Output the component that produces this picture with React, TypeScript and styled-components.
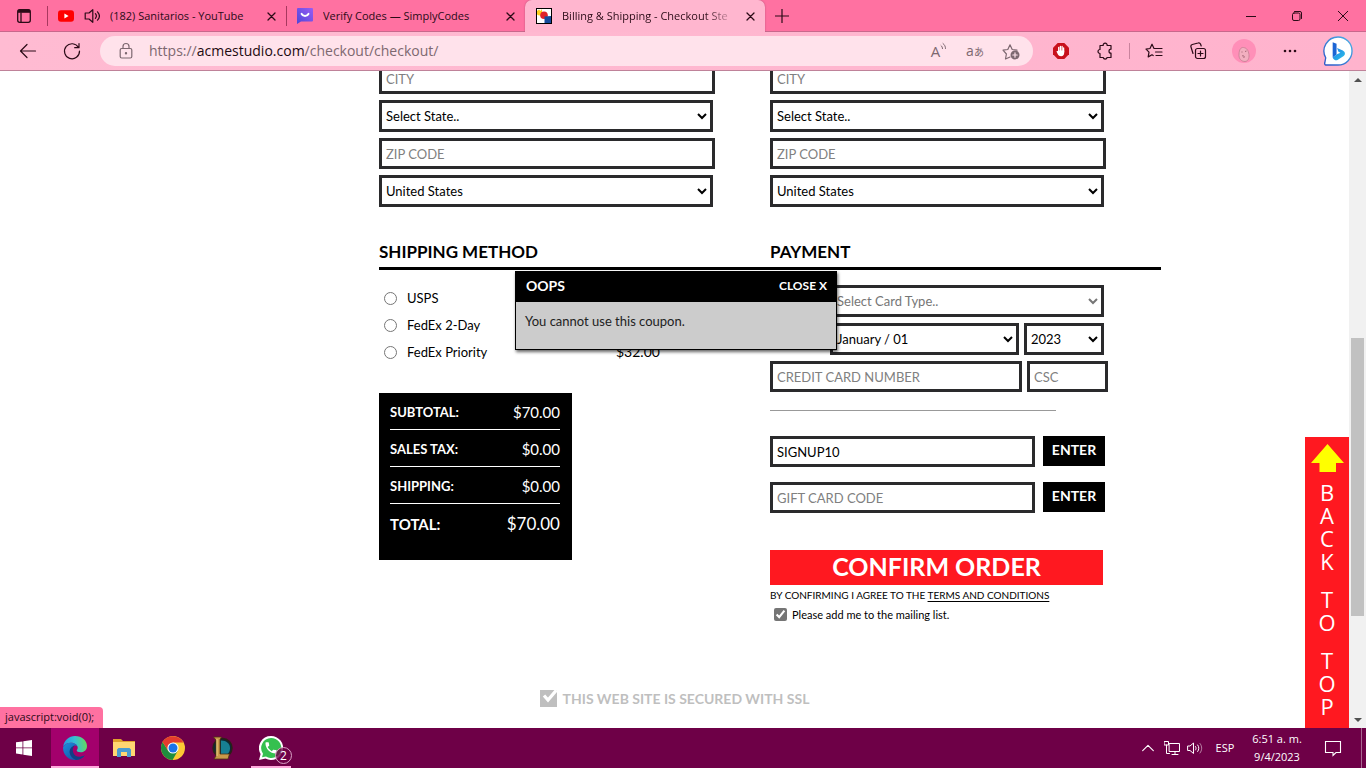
import React from 'react';
import styled, { createGlobalStyle } from 'styled-components';

const shopFont = 'Lato, "Liberation Sans", sans-serif';
const chromeFont = '"Open Sans", "Noto Sans", "Noto Sans CJK JP", sans-serif';

const GlobalStyle = createGlobalStyle`
  *, *::before, *::after { box-sizing: border-box; }
  body { margin: 0; background: #fff; }
  button { border: 0; padding: 0; background: none; color: inherit; font: inherit; }
  svg { display: block; flex: none; }
`;

const Desktop = styled.div`
  display: flex;
  flex-direction: column;
  height: 100vh;
  overflow: hidden;
  font-family: ${chromeFont};
  font-size: 11px;
  color: #2b0b17;
`;

/* Browser tab strip */
const TabStrip = styled.header`
  display: flex;
  flex: none;
  height: 32px;
  background: #ff71a1;
  box-shadow: inset 0 -1px #c8688c;
`;
const TabActions = styled.button`
  display: flex;
  align-items: center;
  justify-content: center;
  width: 47px;
`;
const Tab = styled.div<{ $active?: boolean }>`
  display: flex;
  align-items: center;
  gap: 10px;
  width: ${(p) => (p.$active ? 240 : 239)}px;
  padding: 0 10px;
  border-left: 1px solid transparent;
  ${(p) =>
    p.$active
      ? 'background: #ffb6cf; border-radius: 7px 7px 0 0; box-shadow: 0 0 2px #b8527a; clip-path: inset(0 -2px 0 -2px);'
      : 'background: linear-gradient(#a8385f, #a8385f) 0 6px / 1px 20px no-repeat border-box;'}
`;
const TabTitle = styled.span<{ $faded?: boolean }>`
  flex: 1;
  min-width: 0;
  overflow: hidden;
  white-space: nowrap;
  line-height: 16px;
  ${(p) => p.$faded && 'mask-image: linear-gradient(90deg, #000 82%, transparent);'}
`;
const TabClose = styled.button`
  display: flex;
  align-items: center;
`;
const NewTab = styled.button`
  display: flex;
  align-items: center;
  padding: 0 10px;
`;
const WindowControls = styled.div`
  display: flex;
  margin-left: auto;
`;
const WindowButton = styled.button`
  display: flex;
  align-items: center;
  justify-content: center;
  width: 46px;
`;

/* Browser toolbar */
const Toolbar = styled.nav`
  display: flex;
  flex: none;
  align-items: center;
  height: 39px;
  padding: 0 2px 0 6px;
  background: linear-gradient(90deg, #ffbbd2, #ffb3cd);
  border-bottom: 1px solid #bf8299;
`;
const ToolButton = styled.button<{ $width?: number }>`
  display: flex;
  align-items: center;
  justify-content: center;
  flex: none;
  width: ${(p) => p.$width ?? 44}px;
  height: 32px;
`;
const AddressBar = styled.div`
  display: flex;
  flex: 1;
  align-items: center;
  min-width: 0;
  height: 30px;
  margin: 0 6px;
  padding: 0 4px 0 16px;
  border-radius: 15px;
  background: #ffe2eb;
  color: #7d6870;
`;
const Address = styled.span`
  flex: 1;
  min-width: 0;
  overflow: hidden;
  padding-left: 13px;
  white-space: nowrap;
  font-size: 14px;
  line-height: 20px;
  b { font-weight: 400; color: #1d0a11; }
`;
const ReadAloud = styled.span`
  display: flex;
  align-items: flex-start;
  font-size: 15px;
  line-height: 18px;
`;
const Translate = styled.span`
  font-size: 14px;
  line-height: 18px;
  small { font-size: 10px; }
`;
const ToolDivider = styled.span`
  width: 1px;
  height: 16px;
  margin: 0 2px;
  background: #c9839d;
`;

/* Web page */
const Viewport = styled.div`
  position: relative;
  display: flex;
  flex: 1;
  min-height: 0;
  background: #fff;
`;
const PageArea = styled.div`
  position: relative;
  flex: 1;
  min-width: 0;
  overflow: hidden;
  font-family: ${shopFont};
  font-size: 13px;
  color: #000;
`;
const Checkout = styled.form`
  max-width: 973px;
  margin: -8px auto 0;
  padding-left: 191px;
`;
const Columns = styled.div`
  position: relative;
  display: grid;
  grid-template-columns: 1fr 1fr;
`;
const FieldStack = styled.div`
  display: flex;
  flex-direction: column;
  gap: 6px;
`;
const Field = styled.input<{ $width: number }>`
  width: ${(p) => p.$width}px;
  height: 31px;
  padding: 0 4px;
  border: 3px solid #2a2a2c;
  border-radius: 0;
  background: #fff;
  color: #000;
  font: 13px ${shopFont};
  outline: 0;
  &::placeholder { color: #808080; opacity: 1; }
`;
const Choice = styled.select<{ $width: number; $muted?: boolean }>`
  width: ${(p) => p.$width}px;
  height: 32px;
  padding: 0;
  border: 3px solid #2a2a2c;
  border-radius: 0;
  background: #fff;
  color: ${(p) => (p.$muted ? '#767676' : '#000')};
  font: 13px ${shopFont};
`;
const Headings = styled(Columns)`
  margin-top: 33px;
  padding-bottom: 3px;
  border-bottom: 3px solid #000;
`;
const Heading = styled.h2`
  margin: 0;
  font-size: 17px;
  line-height: 24px;
`;
const Column = styled.section`
  padding-top: 15px;
`;
const ShippingOption = styled.label`
  display: grid;
  grid-template-columns: 13px 199px auto;
  column-gap: 10px;
  align-items: center;
  height: 27px;
  padding-left: 5px;
  line-height: 18px;
  input { width: 13px; height: 13px; margin: 0; }
  span { padding-bottom: 2px; }
`;
const ShippingPrice = styled.span`
  font-size: 14px;
`;
const Summary = styled.dl`
  width: 193px;
  margin: 27px 0 0;
  padding: 0 12px 19px 11px;
  background: #000;
  color: #fff;
`;
const SummaryRow = styled.div<{ $total?: boolean }>`
  display: flex;
  align-items: center;
  justify-content: space-between;
  height: 37px;
  padding-top: 2px;
  border-bottom: ${(p) => (p.$total ? 0 : 1)}px solid #fff;
  dt { font-weight: 700; font-size: ${(p) => (p.$total ? 15 : 13)}px; }
  dd { margin: 0; font-size: ${(p) => (p.$total ? 17 : 15)}px; }
`;
const PaymentRow = styled.div<{ $indent?: boolean }>`
  display: flex;
  gap: 5px;
  padding-left: ${(p) => (p.$indent ? 60 : 0)}px;
`;
const Divider = styled.hr`
  width: 286px;
  height: 1px;
  margin: 18px 0 25px;
  border: 0;
  background: #999;
`;
const CodeRow = styled.div`
  display: flex;
  gap: 8px;
  margin-bottom: 15px;
`;
const EnterButton = styled.button`
  width: 62px;
  height: 30px;
  padding-bottom: 4px;
  background: #000;
  color: #fff;
  font-weight: 700;
  font-size: 14px;
`;
const ConfirmButton = styled.button`
  display: block;
  width: 333px;
  height: 35px;
  margin-top: 37px;
  padding-bottom: 2px;
  background: #ff1820;
  color: #fff;
  font-weight: 700;
  font-size: 25px;
  line-height: 33px;
`;
const Terms = styled.p`
  margin: 0;
  font-size: 10px;
  line-height: 20px;
  a { color: inherit; text-underline-offset: 2px; }
`;
const MailingList = styled.label`
  display: flex;
  align-items: center;
  gap: 5px;
  height: 19px;
  padding-left: 4px;
  font-size: 11px;
  input { width: 13px; height: 13px; margin: 0; accent-color: #757575; }
`;
const Secured = styled.footer`
  display: flex;
  align-items: center;
  justify-content: center;
  gap: 6px;
  height: 18px;
  margin-top: 65px;
  color: #bfbfbf;
  font-weight: 700;
  font-size: 14px;
`;
const Dialog = styled.div`
  position: absolute;
  top: 1px;
  left: 136px;
  width: 322px;
  border: 1px solid #000;
  background: #ccc;
  box-shadow: 1px 2px 3px rgba(0, 0, 0, 0.6);
`;
const DialogHeader = styled.div`
  display: flex;
  align-items: center;
  justify-content: space-between;
  height: 30px;
  padding: 0 9px 4px 10px;
  background: #000;
  color: #fff;
  font-weight: 700;
  font-size: 14px;
`;
const DialogClose = styled.button`
  font-size: 12px;
`;
const DialogText = styled.p`
  margin: 0;
  padding: 9px 9px 18px;
  line-height: 20px;
  color: #222;
`;
const BackToTop = styled.a`
  position: absolute;
  right: 0;
  bottom: 0;
  display: flex;
  flex-direction: column;
  align-items: center;
  gap: 15px;
  width: 44px;
  padding: 7px 0 10px;
  background: #ff1820;
  color: #fff;
  font: 22px/23px "Open Sans", "Noto Sans", sans-serif;
  text-decoration: none;
  svg { margin-bottom: -6px; }
`;
const StackedWord = styled.span`
  width: 18px;
  text-align: center;
  word-break: break-all;
`;
const ScrollBar = styled.div`
  display: flex;
  flex-direction: column;
  align-items: center;
  flex: none;
  width: 17px;
  background: #f1f1f1;
`;
const ScrollArrow = styled.button`
  display: flex;
  align-items: center;
  justify-content: center;
  width: 17px;
  height: 17px;
`;
const ScrollGap = styled.div<{ $grow: number }>`
  flex: ${(p) => p.$grow};
`;
const ScrollThumb = styled.div`
  flex: 278;
  width: 13px;
  background: #c1c1c1;
`;
const LinkStatus = styled.div`
  position: absolute;
  left: 0;
  bottom: 0;
  padding: 2px 9px 3px 5px;
  border-radius: 0 4px 0 0;
  background: #ff71a1;
  line-height: 16px;
`;

/* Taskbar */
const Taskbar = styled.footer`
  display: flex;
  flex: none;
  height: 40px;
  gap: 1px;
  background: #6e0047;
  color: #fff;
`;
const TaskButton = styled.button<{ $active?: boolean; $running?: boolean }>`
  position: relative;
  display: flex;
  align-items: center;
  justify-content: center;
  width: 48px;
  background: ${(p) => (p.$active ? '#a3006c' : 'none')};
  &:first-child { margin-right: 2px; }
  &::after {
    content: '';
    position: absolute;
    bottom: 0;
    left: ${(p) => (p.$active ? 0 : 4)}px;
    right: ${(p) => (p.$active ? 0 : 4)}px;
    height: ${(p) => (p.$running ? 2 : 0)}px;
    background: #ffa9dc;
  }
`;
const UnreadBadge = styled.span`
  position: absolute;
  left: 28px;
  top: 19px;
  width: 17px;
  height: 17px;
  border: 1px solid #d9a3c6;
  border-radius: 50%;
  background: rgba(110, 0, 71, 0.8);
  font-size: 12px;
  line-height: 15px;
  text-align: center;
`;
const Tray = styled.div`
  display: flex;
  align-items: center;
  margin-left: auto;
`;
const TrayButton = styled.button<{ $width: number }>`
  display: flex;
  align-items: center;
  justify-content: center;
  width: ${(p) => p.$width}px;
  height: 40px;
  line-height: 18px;
`;
const ShowDesktop = styled.button`
  width: 5px;
  height: 40px;
  border-left: 1px solid #a86690;
`;

type LineIconProps = { size?: number; stroke?: string; weight?: number; children: React.ReactNode };
const LineIcon = ({ size = 20, stroke = 'currentColor', weight = 1.2, children }: LineIconProps) => (
  <svg width={size} height={size} viewBox={`0 0 ${size} ${size}`} fill="none" stroke={stroke} strokeWidth={weight} strokeLinecap="round" strokeLinejoin="round" aria-hidden="true">
    {children}
  </svg>
);

const CloseIcon = () => (
  <LineIcon size={9} weight={1.3}><path d="M1 1l7 7M8 1L1 8" /></LineIcon>
);

const TabMenuIcon = () => (
  <LineIcon size={16} weight={1.3}>
    <rect x="1.7" y="1.7" width="12.6" height="12.6" rx="2" />
    <path d="M2 3.3h12" strokeWidth="3" strokeLinecap="butt" />
    <path d="M5 5v9" />
  </LineIcon>
);

const YouTubeIcon = () => (
  <svg width="16" height="16" viewBox="0 0 16 16" aria-hidden="true">
    <rect y="2.3" width="16" height="11.4" rx="3" fill="#f00" />
    <path d="M6.4 5.6v4.8L10.6 8z" fill="#fff" />
  </svg>
);

const SpeakerIcon = () => (
  <LineIcon size={16}>
    <path d="M8.8 1.7v12.6L5 11H1.2V5H5zM11.4 5.7c1.2 1.4 1.2 3.2 0 4.6M13.5 3.8c2.3 2.5 2.3 5.9 0 8.4" />
  </LineIcon>
);

const SimplyCodesIcon = () => (
  <svg width="16" height="16" viewBox="0 0 16 16" aria-hidden="true">
    <defs>
      <linearGradient id="codes" x1="0" y1="1" x2="1" y2="0">
        <stop offset="0" stopColor="#4c46d8" />
        <stop offset="1" stopColor="#9a5cf4" />
      </linearGradient>
    </defs>
    <path d="M1 0h14a1 1 0 0 1 1 1v11.500a1 1 0 0 1-1 1H4L0 16V1a1 1 0 0 1 1-1z" fill="url(#codes)" />
    <path d="M4.600 5.800C5.800 8.600 10.300 8.600 11.500 5.800" fill="none" stroke="#fff" strokeWidth="2" strokeLinecap="round" />
  </svg>
);

const ShopIcon = () => (
  <svg width="16" height="16" viewBox="0 0 16 16" aria-hidden="true">
    <rect x=".5" y=".5" width="15" height="15" fill="#fff" stroke="#000" />
    <path d="M1 3l2-1.500L4.500 3 6 1v6l-3 .5L1 6.500z" fill="#ffd21f" />
    <circle cx="8" cy="7.200" r="3.800" fill="#e0222a" />
    <path d="M8.500 8.500L15 8v7H8.500z" fill="#154a9c" />
  </svg>
);

const BingIcon = () => (
  <svg width="30" height="30" viewBox="0 0 31 31" aria-hidden="true">
    <defs>
      <linearGradient id="bing" x1="0" y1="0" x2="1" y2="1">
        <stop offset="0" stopColor="#1f7de6" />
        <stop offset="1" stopColor="#2cc3e8" />
      </linearGradient>
      <linearGradient id="bubble" x1="0" y1="1" x2="1" y2="0">
        <stop offset="0" stopColor="#2b55c8" />
        <stop offset="1" stopColor="#4bb4e6" />
      </linearGradient>
    </defs>
    <path d="M15.500 1A14.500 14.500 0 1 1 15.500 30H3A1.500 1.500 0 0 1 1.800 28L2.800 22.500A14.500 14.500 0 0 1 15.500 1z" fill="#fff" stroke="url(#bubble)" strokeWidth="1.400" />
    <path d="M10 6.500l4 1.500v11.200l-4 3z" fill="#1b64d4" />
    <path d="M10 22.200l4-3 4-2-2-.9-1.500-3.800 6 2.500c2.600 1.300 2.900 4 .9 5.700l-6.400 4.200c-2 .8-4.200-.4-5-2.700z" fill="url(#bing)" />
  </svg>
);

const EdgeIcon = () => (
  <svg width="24" height="24" viewBox="0 0 24 24" aria-hidden="true">
    <defs>
      <linearGradient id="edgeTop" x1="0" y1=".5" x2="1" y2=".4">
        <stop offset="0" stopColor="#2496e0" />
        <stop offset=".5" stopColor="#35bfd6" />
        <stop offset="1" stopColor="#66d95b" />
      </linearGradient>
      <linearGradient id="edgeLow" x1="0" y1="0" x2="1" y2="1">
        <stop offset="0" stopColor="#1b8ddd" />
        <stop offset="1" stopColor="#10489a" />
      </linearGradient>
    </defs>
    <path d="M.2 10.500C1 4.500 6 0 12 0c7 0 12 4.800 12 10 0 4-3 6.300-6.400 6.300-2.600 0-3.900-.9-3.900-1.700 0-.6 1-1 1-2.800C14.700 9.300 12 6.800 8 6.800 4.600 6.800 1.800 8.300.2 10.500z" fill="url(#edgeTop)" />
    <path d="M.1 11C1.700 8.300 4.600 6.800 8 6.800c3.400 0 5.800 1.800 6.500 3.800-.8-.8-1.800-1.100-2.800-1.100-3.200 1-4.700 5-2.700 8.500 2.300 3.800 7.500 4.800 12.800 1.300C19.600 22.300 16 24 12 24 5 24-.4 18 .1 11z" fill="url(#edgeLow)" />
    <path d="M11.700 9.500c-2.600.6-5.700 3.600-5 7.600.5 3.200 2.900 5.800 6.300 6.800 3.700.1 6.900-1.700 8.800-4.600-5.300 2.800-10.300 1.500-11.600-2.800-.9-2.800-.2-5.500 1.500-7z" fill="#123f85" />
  </svg>
);

const FolderIcon = () => (
  <svg width="22" height="20" viewBox="0 0 22 20" aria-hidden="true">
    <path d="M0 1h8l2 2h12V18H0z" fill="#e0a12c" />
    <path d="M0 4h22V18H0z" fill="#ffd672" />
    <path d="M4 19v-7.500L5.500 10h11l1.500 1.500V19h-4v-5H8v5z" fill="#4a9cd0" />
  </svg>
);

const ChromeIcon = () => (
  <svg width="24" height="24" viewBox="0 0 24 24" aria-hidden="true">
    <circle cx="12" cy="12" r="12" fill="#fcc934" />
    <path d="M1.600 6A12 12 0 0 0 11.600 24L16.800 14.800 12 12 7.200 14.700z" fill="#1e8e3e" />
    <path d="M1.600 6A12 12 0 0 1 22.500 6.500H12L7.200 14.700z" fill="#e33b2e" />
    <circle cx="12" cy="12" r="5.600" fill="#fff" />
    <circle cx="12" cy="12" r="4.500" fill="#1a73e8" />
  </svg>
);

const LeagueIcon = () => (
  <svg width="22" height="24" viewBox="0 0 22 24" aria-hidden="true">
    <circle cx="11.500" cy="12" r="9.500" fill="#0b2a36" stroke="#2b2117" strokeWidth="1.500" />
    <path d="M10 4.500c5.500 0 9 3.200 9 7.700 0 2.500-1 4.500-2.500 5.800H10z" fill="#177f93" />
    <path d="M2.500 1h8L9 3.500V18h9.500L17 23H3l2-3V4z" fill="#c9994a" stroke="#4b3414" strokeWidth=".8" />
    <path d="M6 3v17" stroke="#ecd08a" />
  </svg>
);

const WhatsAppIcon = () => (
  <svg width="24" height="24" viewBox="0 0 24 24" aria-hidden="true">
    <path d="M12 0a12 12 0 1 1-5.500 22.600L0 24l1.600-6A12 12 0 0 1 12 0z" fill="#fff" />
    <path d="M12 2a10 10 0 1 1-5 18.500L3 21.300l1-3.600A10 10 0 0 1 12 2z" fill="#35c04f" />
    <path transform="translate(4.600 4.400) scale(.62)" d="M6.600 10.800c1.400 2.800 3.800 5.100 6.600 6.600l2.200-2.200c.3-.3.7-.4 1-.2 1.100.4 2.300.6 3.600.6.6 0 1 .4 1 1V20c0 .6-.4 1-1 1C10.600 21 3 13.400 3 4c0-.6.4-1 1-1h3.500c.6 0 1 .4 1 1 0 1.200.2 2.400.6 3.600.1.3 0 .7-.2 1z" fill="#fff" />
  </svg>
);

const AddressFields = ({ name }: { name: string }) => (
  <FieldStack>
    <Field $width={336} placeholder="CITY" aria-label={`${name} city`} />
    <Choice $width={334} aria-label={`${name} state`}><option>Select State..</option></Choice>
    <Field $width={336} placeholder="ZIP CODE" aria-label={`${name} zip code`} />
    <Choice $width={334} aria-label={`${name} country`}><option>United States</option></Choice>
  </FieldStack>
);

const shipping = [
  { label: 'USPS' },
  { label: 'FedEx 2-Day' },
  { label: 'FedEx Priority', price: '$32.00' },
];

const totals = [
  { label: 'SUBTOTAL:', amount: '$70.00' },
  { label: 'SALES TAX:', amount: '$0.00' },
  { label: 'SHIPPING:', amount: '$0.00' },
  { label: 'TOTAL:', amount: '$70.00', total: true },
];

export default function App() {
  return (
    <Desktop>
      <GlobalStyle />
      <TabStrip>
        <TabActions aria-label="Tab actions"><TabMenuIcon /></TabActions>
        <Tab>
          <YouTubeIcon />
          <SpeakerIcon />
          <TabTitle>(182) Sanitarios - YouTube</TabTitle>
          <TabClose aria-label="Close tab"><CloseIcon /></TabClose>
        </Tab>
        <Tab>
          <SimplyCodesIcon />
          <TabTitle>Verify Codes — SimplyCodes</TabTitle>
          <TabClose aria-label="Close tab"><CloseIcon /></TabClose>
        </Tab>
        <Tab $active>
          <ShopIcon />
          <TabTitle $faded>Billing &amp; Shipping - Checkout Ste</TabTitle>
          <TabClose aria-label="Close tab"><CloseIcon /></TabClose>
        </Tab>
        <NewTab aria-label="New tab"><LineIcon size={14}><path d="M7 0v14M0 7h14" /></LineIcon></NewTab>
        <WindowControls>
          <WindowButton aria-label="Minimize"><LineIcon size={10} weight={1}><path d="M0 5.500h10" /></LineIcon></WindowButton>
          <WindowButton aria-label="Restore"><LineIcon size={10} weight={1}><rect x=".5" y="2" width="7.500" height="7.500" rx="1.500" /><path d="M2.500 .5H8A1.500 1.500 0 0 1 9.500 2v5.500" /></LineIcon></WindowButton>
          <WindowButton aria-label="Close"><LineIcon size={10} weight={1}><path d="M0 0l10 10M10 0L0 10" /></LineIcon></WindowButton>
        </WindowControls>
      </TabStrip>

      <Toolbar>
        <ToolButton aria-label="Back"><LineIcon><path d="M17.500 10H3M9 3.500L2.500 10 9 16.500" /></LineIcon></ToolButton>
        <ToolButton aria-label="Refresh"><LineIcon><path d="M16.500 6.500A7.500 7.500 0 1 0 17.500 10M17 2.500v4.200h-4.300" /></LineIcon></ToolButton>
        <AddressBar>
          <LineIcon><rect x="4.200" y="7.500" width="11.600" height="9.500" rx="1.500" /><path d="M7 7.500V5.500a3 3 0 0 1 6 0v2" /><circle cx="10" cy="12.200" r=".6" fill="currentColor" /></LineIcon>
          <Address>https://<b>acmestudio.com</b>/checkout/checkout/</Address>
          <ToolButton $width={36} aria-label="Read aloud">
            <ReadAloud>A<LineIcon size={7} weight={1}><path d="M1 3.500c1 .8 1.500 2 1.500 3.200M3 1.500c1.700 1.300 2.500 3 2.500 5" /></LineIcon></ReadAloud>
          </ToolButton>
          <ToolButton $width={36} aria-label="Translate"><Translate>a<small>あ</small></Translate></ToolButton>
          <ToolButton $width={36} aria-label="Add to favorites">
            <LineIcon>
              <path d="M9 16l-4.500 2 .9-5L2 9.200l4.800-.7L9 3.800l2.200 4.700 4.800.7" />
              <circle cx="14" cy="14" r="4.500" fill="currentColor" stroke="none" />
              <path d="M14 11.800v4.400M11.800 14h4.400" stroke="#ffe2eb" />
            </LineIcon>
          </ToolButton>
        </AddressBar>
        <ToolButton aria-label="AdBlock">
          <svg width="16" height="16" viewBox="0 0 16 16" aria-hidden="true">
            <path d="M4.700 0h6.600L16 4.700v6.600L11.300 16H4.700L0 11.300V4.700z" fill="#c8101c" />
            <path d="M5.700 4.500v4M7.400 3.300v5M9.100 3.500v5M10.600 5v4" stroke="#fff" strokeWidth="1.300" strokeLinecap="round" />
            <path d="M5 7.500h6.200v2.300c0 2.200-1.200 3.400-3 3.400-2.100 0-3-1-4-3.200l-.8-1.800 1.400-.2z" fill="#fff" />
          </svg>
        </ToolButton>
        <ToolButton aria-label="Extensions">
          <LineIcon size={18}><path d="M4 3.500h3.200a2 2 0 1 1 3.900 0h3.900v3.700a2 2 0 1 0 0 4V15.500h-3.900a2 2 0 0 1-3.900 0H4v-4a2 2 0 0 1 0-4z" /></LineIcon>
        </ToolButton>
        <ToolDivider />
        <ToolButton aria-label="Favorites">
          <LineIcon size={18}><path d="M11 6.500H9L7 2.200 5 6.500l-4 .6 3 3-.8 4.800L7 12.800l1.200.7M11 6.500h6M10.500 10h6.500M11 13.500h6" /></LineIcon>
        </ToolButton>
        <ToolButton aria-label="Collections">
          <LineIcon size={18}><rect x="6.500" y="6.500" width="10" height="10" rx="2" /><path d="M11.500 9v5M9 11.500h5M4 11.500L2 5a2 2 0 0 1 1.300-2.500l5.700-1.500A2 2 0 0 1 11.500 2l.7 2" /></LineIcon>
        </ToolButton>
        <ToolButton $width={48} aria-label="Profile">
          <svg width="24" height="24" viewBox="0 0 24 24" aria-hidden="true">
            <circle cx="12" cy="12" r="12" fill="#ff8fb8" />
            <path d="M7 15c.2-4.500 2-7 4.500-6.500s4.200 1.500 5.200 5.500c1 4-.2 8.500-3.700 8.500S6.500 20 7 15z" fill="#f2afc0" stroke="#c47d92" strokeWidth=".8" />
            <path d="M9.500 13h1M13 12.500l1.500-.5M10 17c2-1 3 1 1.500 2" fill="none" stroke="#8f5262" strokeWidth=".8" />
          </svg>
        </ToolButton>
        <ToolButton aria-label="More">
          <svg width="14" height="4" viewBox="0 0 14 4" fill="currentColor" aria-hidden="true"><circle cx="2" cy="2" r="1.300" /><circle cx="7" cy="2" r="1.300" /><circle cx="12" cy="2" r="1.300" /></svg>
        </ToolButton>
        <ToolButton $width={52} aria-label="Discover"><BingIcon /></ToolButton>
      </Toolbar>

      <Viewport>
        <PageArea>
          <Checkout onSubmit={(e) => e.preventDefault()}>
            <Columns>
              <AddressFields name="Billing" />
              <AddressFields name="Shipping" />
            </Columns>
            <Headings>
              <Heading>SHIPPING METHOD</Heading>
              <Heading>PAYMENT</Heading>
            </Headings>
            <Columns>
              <Column>
                {shipping.map((s) => (
                  <ShippingOption key={s.label}>
                    <input type="radio" name="shipping" />
                    <span>{s.label}</span>
                    {s.price && <ShippingPrice>{s.price}</ShippingPrice>}
                  </ShippingOption>
                ))}
                <Summary>
                  {totals.map((t) => (
                    <SummaryRow key={t.label} $total={t.total}>
                      <dt>{t.label}</dt>
                      <dd>{t.amount}</dd>
                    </SummaryRow>
                  ))}
                </Summary>
              </Column>
              <Column>
                <FieldStack>
                  <PaymentRow $indent>
                    <Choice $width={274} $muted aria-label="Card type"><option>Select Card Type..</option></Choice>
                  </PaymentRow>
                  <PaymentRow $indent>
                    <Choice $width={189} aria-label="Expiration month"><option>January / 01</option></Choice>
                    <Choice $width={80} aria-label="Expiration year"><option>2023</option></Choice>
                  </PaymentRow>
                  <PaymentRow>
                    <Field $width={252} placeholder="CREDIT CARD NUMBER" aria-label="Credit card number" />
                    <Field $width={81} placeholder="CSC" aria-label="CSC" />
                  </PaymentRow>
                </FieldStack>
                <Divider />
                <CodeRow>
                  <Field $width={265} defaultValue="SIGNUP10" aria-label="Coupon code" />
                  <EnterButton type="button">ENTER</EnterButton>
                </CodeRow>
                <CodeRow>
                  <Field $width={265} placeholder="GIFT CARD CODE" aria-label="Gift card code" />
                  <EnterButton type="button">ENTER</EnterButton>
                </CodeRow>
                <ConfirmButton type="submit">CONFIRM ORDER</ConfirmButton>
                <Terms>BY CONFIRMING I AGREE TO THE <a href="#terms">TERMS AND CONDITIONS</a></Terms>
                <MailingList>
                  <input type="checkbox" defaultChecked />
                  Please add me to the mailing list.
                </MailingList>
              </Column>
              <Dialog role="dialog" aria-label="Oops">
                <DialogHeader>
                  OOPS
                  <DialogClose type="button">CLOSE X</DialogClose>
                </DialogHeader>
                <DialogText>You cannot use this coupon.</DialogText>
              </Dialog>
            </Columns>
          </Checkout>
          <Secured>
            <svg width="17" height="17" viewBox="0 0 17 17" aria-hidden="true">
              <path d="M0 0h17v17H0z" fill="#bfbfbf" />
              <path d="M4 5.500l4 4.500 8.500-10" fill="none" stroke="#fff" strokeWidth="3.200" />
            </svg>
            THIS WEB SITE IS SECURED WITH SSL
          </Secured>
          <BackToTop href="#top">
            <svg width="33" height="28" viewBox="0 0 33 28" aria-hidden="true"><path d="M16.500 0L33 19h-8v9H8.500v-9H0z" fill="#ff0" /></svg>
            <StackedWord>BACK</StackedWord>
            <StackedWord>TO</StackedWord>
            <StackedWord>TOP</StackedWord>
          </BackToTop>
        </PageArea>
        <ScrollBar>
          <ScrollArrow aria-label="Scroll up"><svg width="8" height="4" viewBox="0 0 8 4" aria-hidden="true"><path d="M4 0l4 4H0z" fill="#505050" /></svg></ScrollArrow>
          <ScrollGap $grow={250} />
          <ScrollThumb />
          <ScrollGap $grow={95} />
          <ScrollArrow aria-label="Scroll down"><svg width="8" height="4" viewBox="0 0 8 4" aria-hidden="true"><path d="M4 4l4-4H0z" fill="#505050" /></svg></ScrollArrow>
        </ScrollBar>
        <LinkStatus>javascript:void(0);</LinkStatus>
      </Viewport>

      <Taskbar>
        <TaskButton aria-label="Start">
          <svg width="16" height="16" viewBox="0 0 16 16" fill="#fff" aria-hidden="true"><path d="M0 2.300l6.500-.9v6.100H0zM7.300 1.300L16 0v7.500H7.300zM0 8.300h6.500v6.200L0 13.600zM7.300 8.300H16V16l-8.700-1.300z" /></svg>
        </TaskButton>
        <TaskButton $active $running aria-label="Edge"><EdgeIcon /></TaskButton>
        <TaskButton aria-label="File Explorer"><FolderIcon /></TaskButton>
        <TaskButton aria-label="Chrome"><ChromeIcon /></TaskButton>
        <TaskButton aria-label="League of Legends"><LeagueIcon /></TaskButton>
        <TaskButton $running aria-label="WhatsApp"><WhatsAppIcon /><UnreadBadge>2</UnreadBadge></TaskButton>
        <Tray>
          <TrayButton $width={24} aria-label="Hidden icons"><LineIcon size={12} weight={1.1}><path d="M.7 8.700L6 3.400l5.300 5.300" /></LineIcon></TrayButton>
          <TrayButton $width={24} aria-label="Network">
            <LineIcon size={16} weight={1}><path d="M5.500 3.500h10v8h-10zM8 14.500h6M11 11.500v3M.5 1.500h4v3.500h-4zM2.500 5v8.500h3" strokeLinejoin="miter" /></LineIcon>
          </TrayButton>
          <TrayButton $width={22} aria-label="Volume">
            <LineIcon size={16} weight={1}><path d="M1 6h2l3.500-3v10.500L3 10.500H1zM8.500 6.500c.8 1 .8 2.500 0 3.500M10.700 5c1.500 2 1.500 4.500 0 6.500" /><path d="M13 3.500c2.300 2.800 2.300 6.700 0 9.500" opacity=".5" /></LineIcon>
          </TrayButton>
          <TrayButton $width={38}>ESP</TrayButton>
          <TrayButton $width={66}>6:51 a. m.<br />9/4/2023</TrayButton>
          <TrayButton $width={46} aria-label="Notifications">
            <LineIcon size={18} weight={1.1}><path d="M1.500 2.500h15v11h-4.500L9 16.500v-3H1.500z" strokeLinejoin="miter" /></LineIcon>
          </TrayButton>
          <TrayButton as="span" $width={5} />
          <ShowDesktop aria-label="Show desktop" />
        </Tray>
      </Taskbar>
    </Desktop>
  );
}
